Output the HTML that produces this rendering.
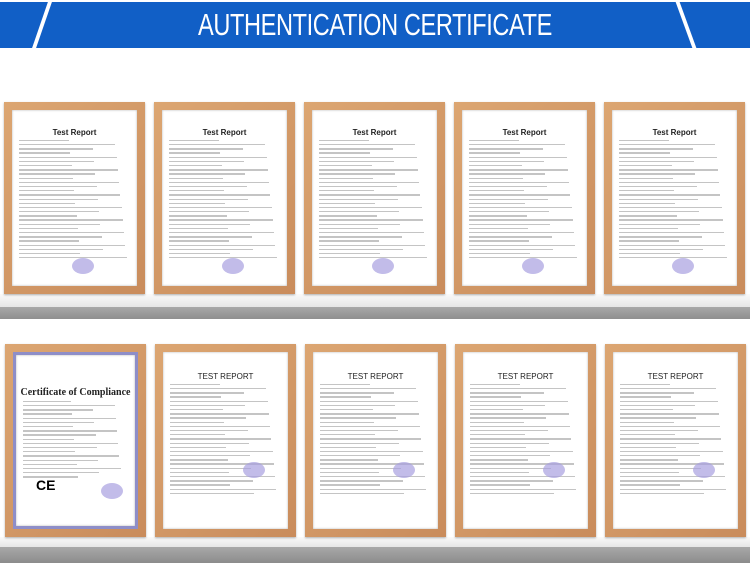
<!DOCTYPE html><html><head><style>
body{margin:0;width:750px;height:582px;background:#fff;position:relative;overflow:hidden;font-family:"Liberation Sans",sans-serif}
.ban{position:absolute;left:0;top:2px;width:750px;height:46px;background:#115fc6}
.ban h1{margin:0;position:absolute;left:0;width:750px;top:5px;text-align:center;color:#fff;font-weight:normal;font-size:31px;letter-spacing:-0.5px;transform:scaleX(.76)}
.sl{position:absolute;top:0;width:4px;height:46px;background:#fff}
.f{position:absolute;width:141px;background:linear-gradient(135deg,#dca672,#c98c5c);box-shadow:0 1px 2px rgba(0,0,0,.3)}
.p{position:absolute;left:8px;right:8px;top:8px;bottom:8px;background:#fff;box-shadow:inset 0 0 2px rgba(0,0,0,.3);overflow:hidden}
.t{text-align:center;font-weight:bold;font-size:8px;margin-top:18px;color:#222}
.l{height:1.3px;background:#c4c4c4;margin:2.9px 7px}
.s{position:absolute;left:0;width:750px}
.seal{position:absolute;width:22px;height:16px;border-radius:50%;background:#a8a0e0;opacity:.7}
</style></head><body>
<div class="ban"><div class="sl" style="left:40px;transform:skewX(-19deg)"></div><div class="sl" style="left:684px;transform:skewX(20deg)"></div><h1>AUTHENTICATION CERTIFICATE</h1></div>

<div class="s" style="top:294px;height:13px;background:linear-gradient(#fafafa,#e6e6e6)"></div>
<div class="s" style="top:307px;height:12px;background:linear-gradient(#a8a8a8,#8f8f8f)"></div>
<div class="s" style="top:537px;height:10px;background:linear-gradient(#fafafa,#e6e6e6)"></div>
<div class="s" style="top:547px;height:16px;background:linear-gradient(#a8a8a8,#8c8c8c)"></div>

<div id="c"></div>
<script>
var h='';var xs=[4,154,304,454,604];
function lines(n){var s='';for(var i=0;i<n;i++){var w=40+((i*37)%55);s+='<div class="l" style="width:'+w+'%"></div>';}return s;}
xs.forEach(function(x){h+='<div class="f" style="left:'+x+'px;top:102px;height:192px"><div class="p"><div class="t">Test Report</div>'+lines(29)+'<div class="seal" style="left:60px;top:148px"></div></div></div>';});
xs.forEach(function(x,i){var t=i==0?'<div class="t" style="font-family:Liberation Serif;font-size:10px;margin-top:32px">Certificate of Compliance</div>':'<div class="t" style="font-weight:normal;font-size:8px;margin-top:20px">TEST REPORT</div>';
h+='<div class="f" style="left:'+(x+1)+'px;top:344px;height:193px"><div class="p"'+(i==0?' style="border:3px solid #8e8ec8;box-sizing:border-box"':'')+'>'+t+lines(i==0?19:27)+'<div class="seal" style="left:'+(i==0?85:80)+'px;top:'+(i==0?128:110)+'px"></div>'+(i==0?'<div style="position:absolute;left:20px;top:122px;font-size:14px;font-weight:bold">CE</div>':'')+'</div></div>';});
document.getElementById('c').innerHTML=h;
</script>
</body></html>
